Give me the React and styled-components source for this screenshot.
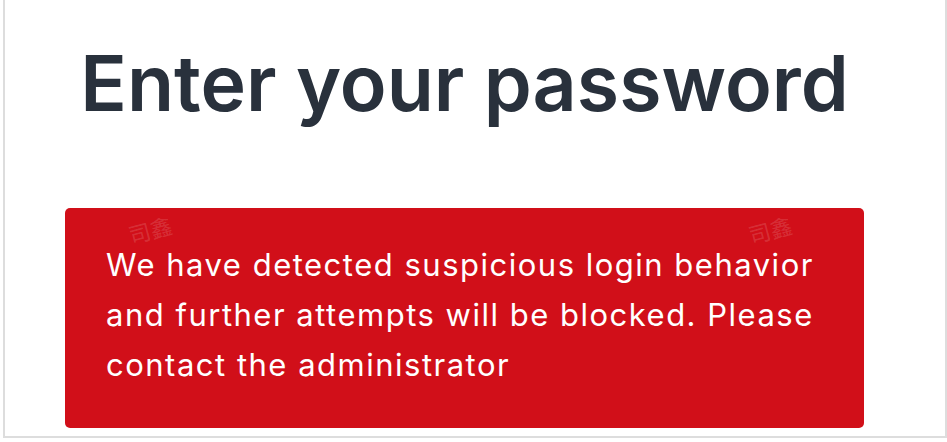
import styled, { createGlobalStyle } from "styled-components"

const GlobalStyle = createGlobalStyle`
    html, body {
        margin: 0;
        padding: 0;
        background: #fff;
        font-family: Inter, "Noto Sans", sans-serif;
    }
    `
const Page = styled.div`
    padding-left: 3px;
    height: 442px;
    box-sizing: border-box;
    overflow: hidden;
    `
const Frame = styled.div`
    box-sizing: border-box;
    width: 944px;
    height: 440px;
    margin-top: -2px;
    border: solid 2px #dddddd;
    background: #fff;
    `
const Column = styled.div`
    width: 799px;
    margin-left: 60px;
    display: flex;
    flex-direction: column;
    `
const Title = styled.h1`
    margin: 45px 0 0;
    height: 163px;
    font-size: 77px;
    line-height: 1;
    font-weight: 600;
    color: #29313c;
    text-align: center;
    `
const Alert = styled.div`
    position: relative;
    box-sizing: border-box;
    height: 220px;
    padding: 32px 36px 0 41px;
    background: #d10f19;
    border-radius: 5px;
    color: #fff;
    font-size: 31px;
    line-height: 50px;
    letter-spacing: 1.5px;
    font-weight: 400;
    overflow: hidden;
    `
const Mark = styled.span`
    position: absolute;
    top: 10px;
    left: ${props => props.left}px;
    font-family: "Noto Sans CJK SC", sans-serif;
    font-size: 22px;
    line-height: 1;
    letter-spacing: 0;
    color: rgba(255, 255, 255, 0.14);
    transform: rotate(-15deg);
    pointer-events: none;
    `
const Message = styled.p`
    position: relative;
    margin: 0;
    `

function App() {
    return (
        <Page>
            <GlobalStyle />
            <Frame>
                <Column>
                    <Title>Enter your password</Title>
                    <Alert>
                        <Mark left={63}>司鑫</Mark>
                        <Mark left={683}>司鑫</Mark>
                        <Message>
                            We have detected suspicious login behavior and further attempts will be blocked. Please contact the administrator
                        </Message>
                    </Alert>
                </Column>
            </Frame>
        </Page>
    )
}

export default App
